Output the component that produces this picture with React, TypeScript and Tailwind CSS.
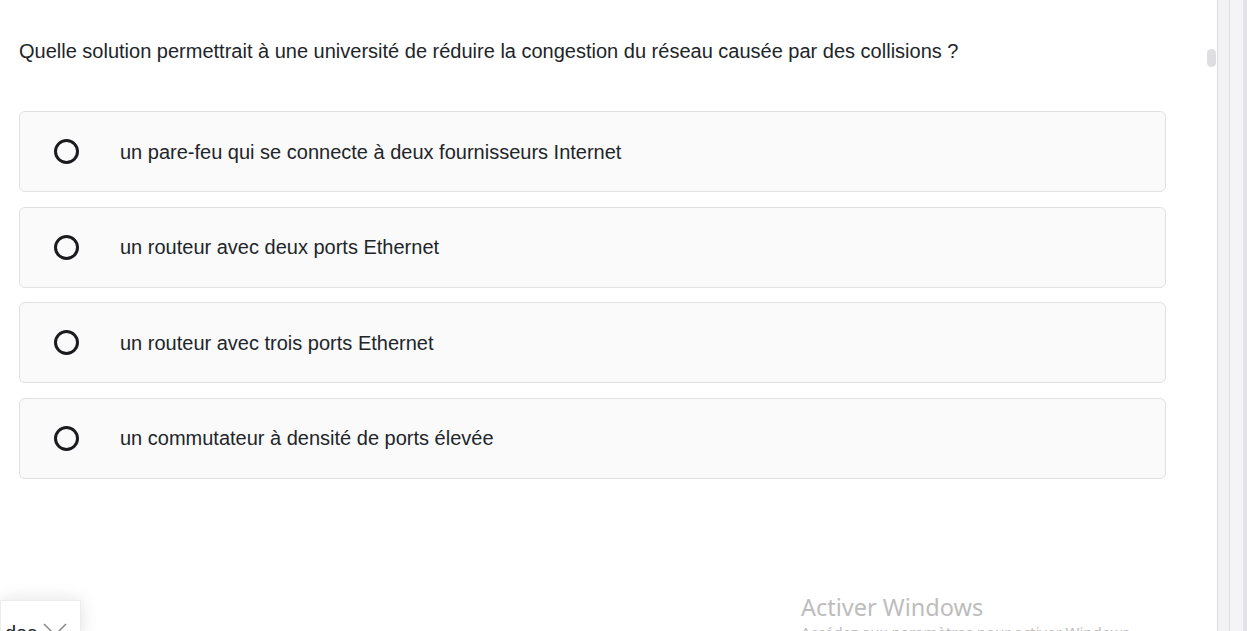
import React from 'react';

const options = [
  'un pare-feu qui se connecte à deux fournisseurs Internet',
  'un routeur avec deux ports Ethernet',
  'un routeur avec trois ports Ethernet',
  'un commutateur à densité de ports élevée',
];

export default function App() {
  return (
    <div className="relative flex h-[631px] w-[1247px] overflow-hidden bg-white font-['Liberation_Sans',Arial,sans-serif] text-[#212529]">
      {/* Question */}
      <div className="flex-1 pl-[19px] pr-[51px] pt-[37px]">
        <p className="text-[20px] leading-[28px]">
          Quelle solution permettrait à une université de réduire la congestion du réseau causée par des collisions ?
        </p>
        <div className="mt-[46px] flex flex-col gap-[14.5px]">
          {options.map((opt) => (
            <label
              key={opt}
              className="flex h-[81px] cursor-pointer items-center rounded-[6px] border border-[#e1e1e1] bg-[#fafafa] pl-[34px]"
            >
              <span className="h-[25px] w-[25px] shrink-0 rounded-full border-[3px] border-[#1b1b1f]" />
              <span className="ml-[41px] text-[20px] leading-[28px]">{opt}</span>
            </label>
          ))}
        </div>
      </div>

      {/* Scrollbar strips */}
      <div className="flex h-full">
        <div className="h-full w-[13px] border-l border-r border-[#dcdcdf] bg-[#f2f2f4]" />
        <div className="h-full w-[13px] bg-[#f4f4f6]" />
        <div className="h-full w-[4px] bg-[#e2e2e8]" />
      </div>

      {/* Overlay scroll thumb */}
      <div className="absolute left-[1207px] top-[49px] h-[18px] w-[9px] rounded-full bg-[#dedee0]" />

      {/* Bottom-left popup */}
      <div className="absolute left-0 top-[600px] flex h-[40px] w-[81px] items-start gap-[6px] border border-[#ececec] bg-white pl-[4px] pt-[20px] shadow-[0_0_18px_rgba(0,0,0,0.12)]">
        <span className="text-[20px] leading-[24px]">des</span>
        <svg width="24" height="14" viewBox="0 0 24 14" className="mt-[2px]">
          <path d="M1 1 L12 12 L23 1" fill="none" stroke="#8a8a8a" strokeWidth="1.5" />
        </svg>
      </div>

      {/* Windows watermark */}
      <div className="absolute left-[801px] top-[591px] font-['Noto_Sans',sans-serif] text-[#bdbdbd]">
        <div className="text-[23.5px] leading-[32px]">Activer Windows</div>
        <div className="text-[15px] leading-[18px]">Accédez aux paramètres pour activer Windows.</div>
      </div>
    </div>
  );
}
